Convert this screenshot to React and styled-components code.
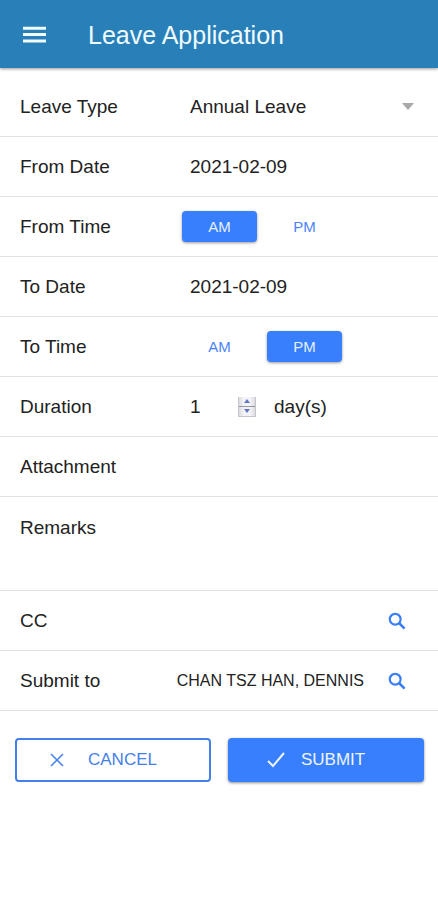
import React, { useState } from 'react';
import styled, { createGlobalStyle, css } from 'styled-components'

const GlobalStyle = createGlobalStyle`
  * {
    box-sizing: border-box;
  }
  body {
    margin: 0;
    background: #fff;
    color: #222;
    font-family: "Liberation Sans", Arial, sans-serif;
    font-size: 19px;
    line-height: 24px;
  }
  button, input, select, textarea {
    margin: 0;
    padding: 0;
    border: 0;
    border-radius: 0;
    background: transparent;
    color: inherit;
    font: inherit;
    outline: none;
  }
  button {
    cursor: pointer;
  }
`

const Header = styled.header`
  display: flex;
  align-items: center;
  height: 68px;
  padding: 2px 20px 0;
  background: #2980b9;
  color: #f0fbff;
  box-shadow: 0 1px 3px rgba(0, 0, 0, 0.4);
`

const MenuButton = styled.button`
  display: flex;
  width: 29px;
  height: 28px;
  align-items: center;
  justify-content: center;
`

const Title = styled.h1`
  margin: 0 0 0 39px;
  font-size: 25px;
  line-height: 32px;
  font-weight: normal;
`

const Form = styled.form`
  padding-top: 9px;
`

const Row = styled.div`
  display: flex;
  align-items: ${p => p.$tall ? 'flex-start' : 'center'};
  height: ${p => p.$tall ? 94 : 60}px;
  padding: ${p => p.$tall ? '19px' : '0'} 24px 0 20px;
  border-bottom: 1px solid #e2e2e2;
`

const labelStyle = css`
  flex: ${p => p.$grow ? '1' : '0 0 162px'};
  white-space: nowrap;
`

const Label = styled.label`
  ${labelStyle}
`

const Legend = styled.span`
  ${labelStyle}
`

const SelectBox = styled.div`
  display: flex;
  flex: 1;
  align-items: center;
`

const Select = styled.select`
  flex: 1;
  min-width: 0;
  padding-left: 8px;
  appearance: none;
`

const Input = styled.input`
  flex: 1;
  min-width: 0;
  padding-left: 8px;
`

const FileInput = styled.input`
  flex: 1;
  min-width: 0;
  opacity: 0;
`

const Textarea = styled.textarea`
  flex: 1;
  min-width: 0;
  height: 60px;
  padding-left: 8px;
  resize: none;
`

const Toggle = styled.div`
  display: flex;
  gap: 10px;
`

const ToggleButton = styled.button`
  width: 75px;
  height: 31px;
  border-radius: 4px;
  font-size: 15px;
  line-height: 31px;
  color: ${p => p.$active ? '#e6f0ff' : '#4a84f8'};
  ${p => p.$active && css`
    background: #387ffe;
    box-shadow: 0 1px 3px rgba(0, 0, 0, 0.4);
  `}
`

const NumberInput = styled.input`
  width: 56px;
  padding-left: 8px;
  appearance: textfield;
  &::-webkit-inner-spin-button {
    appearance: none;
  }
`

const Stepper = styled.div`
  display: flex;
  flex-direction: column;
  width: 18px;
  margin-right: 18px;
  border: solid #c4c4cc;
  border-width: 0 1px 1px;
`

const StepButton = styled.button`
  display: flex;
  align-items: center;
  justify-content: center;
  height: 9px;
  background: linear-gradient(to right, #dcdce0, #f4f4f8 30%, #f4f4f8 70%, #dcdce0);
  & + & {
    border-top: 1px solid #96969e;
    height: 10px;
  }
`

const Person = styled.output`
  font-size: 16px;
  white-space: nowrap;
`

const SearchButton = styled.button`
  display: flex;
  align-items: center;
  justify-content: center;
  width: 34px;
  height: 34px;
  margin-left: 16px;
`

const Actions = styled.div`
  display: flex;
  gap: 17px;
  padding: 27px 14px 27px 15px;
`

const ActionButton = styled.button`
  display: flex;
  flex: 1;
  align-items: center;
  height: 44px;
  padding-left: ${p => p.$primary ? 37 : 33}px;
  gap: ${p => p.$primary ? 14 : 24}px;
  border-radius: 4px;
  font-size: 17px;
  ${p => p.$primary ? css`
    background: #387ffe;
    color: #eef5ff;
    box-shadow: 0 1px 3px rgba(0, 0, 0, 0.45);
  ` : css`
    border: 2px solid #4580ea;
    color: #4580ea;
  `}
`

const MenuIcon = () => (
  <svg width="23" height="18" viewBox="0 0 23 18" aria-hidden="true">
    <path d="M0 2.2h23M0 8.6h23M0 15h23" stroke="currentColor" strokeWidth="3" />
  </svg>
)

const CaretIcon = () => (
  <svg width="12" height="7" viewBox="0 0 12 7" aria-hidden="true">
    <path d="M0 0h12L6 7z" fill="#a8a8a8" />
  </svg>
)

const StepIcon = ({ down }) => (
  <svg width="6" height="4" viewBox="0 0 6 4" aria-hidden="true">
    <path d={down ? 'M0 0h6L3 4z' : 'M0 4h6L3 0z'} fill="#6474c0" />
  </svg>
)

const SearchIcon = () => (
  <svg width="18" height="18" viewBox="0 0 18 18" fill="none" stroke="#3b7ff5" aria-hidden="true">
    <circle cx="7.2" cy="7.2" r="5.4" strokeWidth="2.2" />
    <path d="M11 11l5.6 5.6" strokeWidth="2.6" />
  </svg>
)

const CloseIcon = () => (
  <svg width="14" height="14" viewBox="0 0 14 14" fill="none" stroke="currentColor" aria-hidden="true">
    <path d="M1 1l12 12M13 1L1 13" strokeWidth="1.5" />
  </svg>
)

const CheckIcon = () => (
  <svg width="22" height="18" viewBox="0 0 22 18" fill="none" stroke="currentColor" aria-hidden="true">
    <path d="M3 10l5 5L19 2" strokeWidth="2" />
  </svg>
)

const TimeRow = ({ label, value, onChange }) => (
  <Row role="group" aria-label={label}>
    <Legend>{label}</Legend>
    <Toggle>
      {['AM', 'PM'].map(v => (
        <ToggleButton
          key={v}
          type="button"
          $active={value === v}
          aria-pressed={value === v}
          onClick={() => onChange(v)}
        >
          {v}
        </ToggleButton>
      ))}
    </Toggle>
  </Row>
)

const App = () => {
  const [form, setForm] = useState({
    type: 'Annual Leave',
    fromDate: '2021-02-09',
    fromTime: 'AM',
    toDate: '2021-02-09',
    toTime: 'PM',
    duration: 1,
    remarks: ''
  })

  const update = (key, value) => setForm({ ...form, [key]: value })

  return (
    <>
      <GlobalStyle />
      <Header>
        <MenuButton type="button" aria-label="Menu"><MenuIcon /></MenuButton>
        <Title>Leave Application</Title>
      </Header>
      <Form onSubmit={e => e.preventDefault()}>
        <Row>
          <Label htmlFor="type">Leave Type</Label>
          <SelectBox>
            <Select id="type" value={form.type} onChange={e => update('type', e.target.value)}>
              <option>Annual Leave</option>
            </Select>
            <CaretIcon />
          </SelectBox>
        </Row>
        <Row>
          <Label htmlFor="fromDate">From Date</Label>
          <Input id="fromDate" type="text" value={form.fromDate} onChange={e => update('fromDate', e.target.value)} />
        </Row>
        <TimeRow label="From Time" value={form.fromTime} onChange={v => update('fromTime', v)} />
        <Row>
          <Label htmlFor="toDate">To Date</Label>
          <Input id="toDate" type="text" value={form.toDate} onChange={e => update('toDate', e.target.value)} />
        </Row>
        <TimeRow label="To Time" value={form.toTime} onChange={v => update('toTime', v)} />
        <Row>
          <Label htmlFor="duration">Duration</Label>
          <NumberInput
            id="duration"
            type="number"
            value={form.duration}
            onChange={e => update('duration', Number(e.target.value))}
          />
          <Stepper>
            <StepButton type="button" aria-label="Increase" onClick={() => update('duration', form.duration + 1)}>
              <StepIcon />
            </StepButton>
            <StepButton type="button" aria-label="Decrease" onClick={() => update('duration', Math.max(0, form.duration - 1))}>
              <StepIcon down />
            </StepButton>
          </Stepper>
          <span>day(s)</span>
        </Row>
        <Row>
          <Label htmlFor="attachment">Attachment</Label>
          <FileInput id="attachment" type="file" />
        </Row>
        <Row $tall>
          <Label htmlFor="remarks">Remarks</Label>
          <Textarea id="remarks" value={form.remarks} onChange={e => update('remarks', e.target.value)} />
        </Row>
        <Row>
          <Legend $grow>CC</Legend>
          <SearchButton type="button" aria-label="Search CC"><SearchIcon /></SearchButton>
        </Row>
        <Row>
          <Label htmlFor="submitTo" $grow>Submit to</Label>
          <Person id="submitTo">CHAN TSZ HAN, DENNIS</Person>
          <SearchButton type="button" aria-label="Search approver"><SearchIcon /></SearchButton>
        </Row>
        <Actions>
          <ActionButton type="button"><CloseIcon />CANCEL</ActionButton>
          <ActionButton type="submit" $primary><CheckIcon />SUBMIT</ActionButton>
        </Actions>
      </Form>
    </>
  )
}

export default App
